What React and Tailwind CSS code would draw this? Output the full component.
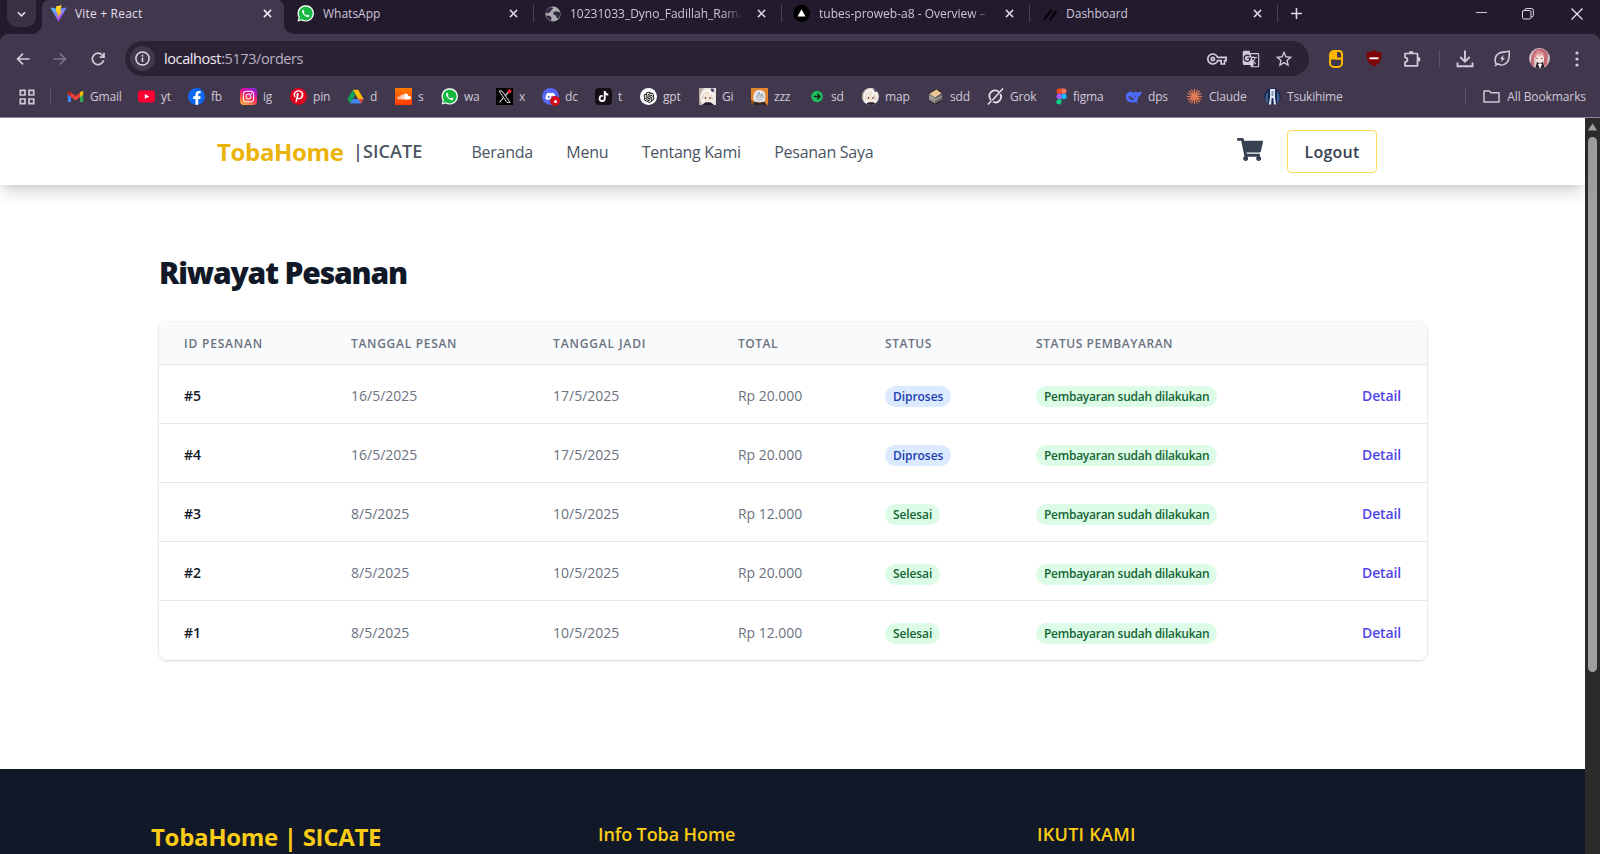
import React from "react";
import { FaFacebookF, FaInstagram, FaPinterestP, FaTiktok, FaSoundcloud, FaDiscord, FaShoppingCart } from "react-icons/fa";
import { AiOutlineOpenAI } from "react-icons/ai";
import { MdOutlineVpnKey, MdGTranslate, MdStarBorder } from "react-icons/md";

function ViteIcon() {
  return (
    <svg viewBox="0 0 17 17" className="h-[17px] w-[17px] shrink-0">
      <defs>
        <linearGradient id="va" x1="0" y1="0" x2="0.6" y2="1">
          <stop offset="0" stopColor="#41d1ff" />
          <stop offset="1" stopColor="#bd34fe" />
        </linearGradient>
        <linearGradient id="vb" x1="0" y1="0" x2="0" y2="1">
          <stop offset="0" stopColor="#ffdd35" />
          <stop offset="1" stopColor="#ffa800" />
        </linearGradient>
      </defs>
      <path d="M.4 2.6 8.5 16.8 16.7 2.6 11.5 3.5 5.5 3.4Z" fill="url(#va)" />
      <path d="M11.6.2 6.2 1.3 5.8 7.2l1.8-.4-.6 3 1.3-.3-.7 4 4.4-7.4-1.7.3Z" fill="url(#vb)" />
    </svg>
  );
}

function WhatsAppIcon() {
  return (
    <svg viewBox="0 0 17 17" className="h-[17px] w-[17px] shrink-0">
      <path d="M.5 16.6 1.6 12.4A8.2 8.2 0 1 1 4.7 15.5Z" fill="#fff" />
      <path d="M2 15.1 2.9 12.2A6.9 6.9 0 1 1 5 14.3Z" fill="#14b83f" />
      <path d="M6 4.6c-.9.4-1.3 1.5-.8 2.6.9 2.2 2.4 3.8 4.7 4.8 1.3.5 2.4-.2 2.5-1.6L10.6 9.4l-1 1C8.400 10 7.300 8.900 6.800 7.700l.8-.9Z" fill="#fff" />
    </svg>
  );
}

function GlobeIcon() {
  return (
    <svg viewBox="0 0 16 16" className="h-[16px] w-[16px] shrink-0">
      <circle cx="8" cy="8" r="7.6" fill="#a9abb1" />
      <path d="M6 1.200c2 .4 2.800 1.300 1.200 2.400-1.500.6-.6 2-2.200 2.400L2.600 7.500.8 6.500C1.500 3.500 3.500 1.500 6 1.200ZM8.500 6l3-.8 3.700 1.300c.3 2.500-.4 4.500-2 6l-1.700-.7-.4-2.400-2.700-.9ZM1 9.600l4 .5 1.500 1.700-.4 3C3.500 14.200 1.500 12.300 1 9.600Z" fill="#33293f" />
    </svg>
  );
}

function TriangleIcon() {
  return (
    <svg viewBox="0 0 17 17" className="h-[17px] w-[17px] shrink-0">
      <circle cx="8.500" cy="8.500" r="8.400" fill="#000" />
      <path d="M8.500 4.200 12.500 11.600H4.500Z" fill="#fff" />
    </svg>
  );
}

function SlashIcon() {
  return (
    <svg viewBox="0 0 16 16" className="h-4 w-4 shrink-0">
      <path d="M4 12.500 10 4.500M9.500 13 14.500 6" stroke="#08070a" strokeWidth="2.600" strokeLinecap="round" />
    </svg>
  );
}

function Cross({ className }) {
  return (
    <svg viewBox="0 0 10 10" className={className} fill="none" stroke="currentColor">
      <path d="M1 1 9 9M9 1 1 9" strokeWidth="1.700" />
    </svg>
  );
}

function Tab({ icon, title, fade }) {
  return (
    <div className="flex h-[27px] w-[248px] shrink-0 items-center pr-[11px]">
      {icon}
      <span
        className={`ml-[9px] min-w-0 flex-1 whitespace-nowrap text-[12px] leading-4 text-[#cfc6d8] ${
          fade ? "[mask-image:linear-gradient(to_right,black_88%,transparent)]" : ""
        }`}
      >
        {title}
      </span>
      <Cross className="ml-[14px] h-[9px] w-[9px] shrink-0 text-[#d9d1e2]" />
      <span className="ml-[15px] h-[17px] w-px shrink-0 bg-[#4c4259]" />
    </div>
  );
}

function TabStrip() {
  return (
    <div className="flex h-[34px] items-start bg-[#231a2d]">
      <div className="ml-[7px] flex h-[27px] w-[29px] items-center justify-center rounded-b-[10px] bg-[#3a3145] text-[#e3dcea]">
        <svg viewBox="0 0 10 6" className="h-[6px] w-[9px]" fill="none" stroke="currentColor" strokeWidth="1.800">
          <path d="M1 1 5 5 9 1" />
        </svg>
      </div>
      <div className="relative ml-[6px] flex h-[34px] w-[242px] items-center rounded-t-[7px] bg-[#41384d] pb-[7px] pl-[8px] pr-[12px]">
        <svg viewBox="0 0 10 10" className="absolute -left-[10px] bottom-0 h-[10px] w-[10px]">
          <path d="M10 0V10H0A10 10 0 0 0 10 0Z" fill="#41384d" />
        </svg>
        <svg viewBox="0 0 10 10" className="absolute -right-[10px] bottom-0 h-[10px] w-[10px]">
          <path d="M0 0V10H10A10 10 0 0 1 0 0Z" fill="#41384d" />
        </svg>
        <ViteIcon />
        <span className="ml-[8px] flex-1 text-[12px] leading-4 tracking-[0.19px] text-[#e6dfec]">Vite + React</span>
        <Cross className="h-[9px] w-[9px] text-[#efe9f4]" />
      </div>
      <div className="ml-[13px] flex">
        <Tab icon={<WhatsAppIcon />} title="WhatsApp" />
        <Tab icon={<GlobeIcon />} title="10231033_Dyno_Fadillah_Rama" fade />
        <Tab icon={<TriangleIcon />} title="tubes-proweb-a8 - Overview –" fade />
        <Tab icon={<SlashIcon />} title="Dashboard" />
      </div>
      <div className="flex h-[27px] flex-1 items-center text-[#ddd5e5]">
        <svg viewBox="0 0 11 11" className="ml-[2px] h-[11px] w-[11px]" stroke="currentColor" strokeWidth="1.600">
          <path d="M5.500 0V11M0 5.500H11" />
        </svg>
        <span className="ml-[174px] mt-[-2px] h-px w-[11px] bg-[#cfc7d6]" />
        <svg viewBox="0 0 12 12" className="ml-[35px] h-[12px] w-[12px]" fill="none" stroke="#e3dcea">
          <rect x=".5" y="2.500" width="8.500" height="8.500" rx="1.500" />
          <path d="M3 2.500V1.500Q3 .5 4.500 .5H9.500Q11.400 .5 11.400 2.500V7.500Q11.400 9 9 9" />
        </svg>
        <svg viewBox="0 0 12 12" className="ml-[37px] h-[12px] w-[12px]" stroke="#efe9f4" strokeWidth="1.200">
          <path d="M.5 .5 11.500 11.500M11.500 .5 .5 11.500" />
        </svg>
      </div>
    </div>
  );
}

function Toolbar() {
  return (
    <div className="relative flex h-[49px] items-center bg-[#41384d] text-[#d3cadd]">
      <div className="absolute right-0 top-0 h-[8px] w-[8px] bg-[#231a2d]">
        <div className="h-full w-full rounded-tr-[8px] bg-[#41384d]" />
      </div>
      <div className="absolute left-0 top-0 h-[8px] w-[8px] bg-[#231a2d]">
        <div className="h-full w-full rounded-tl-[8px] bg-[#41384d]" />
      </div>
      <svg viewBox="0 0 14 12" className="ml-[16px] h-[12px] w-[14px]" fill="none" stroke="currentColor" strokeWidth="1.700">
        <path d="M13.500 6H1.500M7 .7 1.600 6 7 11.300" />
      </svg>
      <svg viewBox="0 0 14 12" className="ml-[23px] h-[12px] w-[14px] text-[#7c7289]" fill="none" stroke="currentColor" strokeWidth="1.700">
        <path d="M.5 6H12.500M7 .7 12.400 6 7 11.300" />
      </svg>
      <svg viewBox="0 0 14 14" className="ml-[24px] h-[14px] w-[14px]" fill="none" stroke="currentColor" strokeWidth="1.700">
        <path d="M12.600 8.300A5.700 5.700 0 1 1 11.400 3.200L12.800 4.800" />
        <path d="M13 .8V5.100H8.700" />
      </svg>
      <div className="ml-[20px] flex h-[35px] w-[1184px] items-center rounded-full bg-[#2b2334] pl-[5px]">
        <span className="flex h-[25px] w-[25px] items-center justify-center rounded-full bg-[#41384d]">
          <svg viewBox="0 0 15 15" className="h-[15px] w-[15px]" fill="none" stroke="#e0d8e8" strokeWidth="1.500">
            <circle cx="7.500" cy="7.500" r="6.600" />
            <path d="M7.500 6.600V11M7.500 3.800V5.400" />
          </svg>
        </span>
        <span className="ml-[9px] text-[14.500px] tracking-[-0.4px] text-[#b9b0c4]">
          <span className="text-[#efe9f4]">localhost</span>:5173/orders
        </span>
        <MdOutlineVpnKey className="ml-auto h-[20px] w-[20px]" />
        <MdGTranslate className="ml-[15px] h-[18px] w-[18px]" />
        <MdStarBorder className="ml-[14px] mr-[15px] h-[20px] w-[20px]" />
      </div>
      <svg viewBox="0 0 14 18" className="ml-[20px] h-[18px] w-[14px]" fill="none" stroke="#ffb700" strokeWidth="2">
        <rect x="1" y="1" width="12" height="16" rx="4" fill="#41384d" />
        <path d="M2 8.500H12" />
        <path d="M7 1H11Q13 2 13 4V8.500H7Z" fill="#41384d" />
        <path d="M1.500 8.500V5Q2 1.500 6.500 1.500V8.500Z" fill="#ffb700" stroke="none" />
      </svg>
      <svg viewBox="0 0 16 17" className="ml-[23px] h-[17px] w-[16px]">
        <path d="M8 .3Q10.500 2.300 15.700 2.500 15.700 8 14.300 11 12.500 14.500 8 16.700 3.500 14.500 1.700 11 .3 8 .3 2.500 5.500 2.300 8 .3Z" fill="#7e0309" />
        <path d="M3.500 8.300H12.500" stroke="#fff" strokeWidth="1.800" />
      </svg>
      <svg viewBox="0 0 18 18" className="ml-[21px] h-[18px] w-[18px]" fill="none" stroke="currentColor" strokeWidth="1.700" strokeLinejoin="round">
        <path d="M2 3.500H14.500V15.800H2V12Q4.500 11.500 4.500 9.700 4.500 7.700 2 7.300Z" />
        <path d="M6.500 3V1.700H9.800V3ZM15 7.700H16.800V11H15Z" fill="currentColor" strokeWidth="1" />
      </svg>
      <span className="ml-[18px] h-[17px] w-px bg-[#5f556c]" />
      <svg viewBox="0 0 18 18" className="ml-[16px] h-[18px] w-[18px]" fill="none" stroke="currentColor" strokeWidth="1.900">
        <path d="M9 .5V11.500M4.300 7 9 11.700 13.700 7M1.500 12.500V16.300H16.500V12.500" />
      </svg>
      <svg viewBox="0 0 17 17" className="ml-[20px] h-[17px] w-[17px]" fill="none" stroke="currentColor" strokeWidth="1.600">
        <path d="M2.300 14.700C.3 11 1 6 4 3.800 7 1.500 11 2.300 15.200 1.300 15.500 6 15.500 10 12.700 12.800 9.800 15.800 6 15.300 3.800 13.600M1 16 3.800 13.500" />
        <path d="M9.600 4.800 6 9H8L7.200 12.300 11 8H9Z" fill="currentColor" stroke="none" />
      </svg>
      <svg viewBox="0 0 21 21" className="ml-[18px] h-[21px] w-[21px]">
        <defs><clipPath id="av"><circle cx="10.500" cy="10.500" r="10.400" /></clipPath></defs>
        <g clipPath="url(#av)">
          <rect width="21" height="21" fill="#d9c6c8" />
          <path d="M2 18Q1 4 8 1 16 0 19 6L18 17 15 18 15 8 10 4 5 9 5 18Z" fill="#c26875" />
          <path d="M6 7Q10 3 15 7V12Q12 16 7 13Z" fill="#f6e5df" />
          <path d="M5 7 9 2 15 5 15.500 10 12 6 10.500 9 9 5.500 6.500 11Z" fill="#dc8f98" />
          <path d="M6 21 8 14 11 16 14 14 16 21Z" fill="#2c2730" />
          <path d="M9 16 11 21 13 16Z" fill="#fff" />
          <path d="M7.500 10.500H9M12 10.500H13.500" stroke="#8e2e3c" />
        </g>
      </svg>
      <svg viewBox="0 0 4 16" className="ml-[25px] h-[16px] w-[4px]" fill="currentColor">
        <circle cx="2" cy="2" r="1.600" /><circle cx="2" cy="8" r="1.600" /><circle cx="2" cy="14" r="1.600" />
      </svg>
    </div>
  );
}

function Tile({ className, children }) {
  return <span className={`flex h-[17px] w-[17px] shrink-0 items-center justify-center overflow-hidden ${className}`}>{children}</span>;
}

function Svg({ children, box = "0 0 17 17" }) {
  return <svg viewBox={box} className="h-[17px] w-[17px] shrink-0">{children}</svg>;
}

const gmail = (
  <Svg>
    <path d="M.8 4V14H4V7Z" fill="#4285f4" />
    <path d="M13 7V14H16.200V4Z" fill="#34a853" />
    <path d="M13 4 16.200 3V6.500L13 9Z" fill="#fbbc04" />
    <path d="M4 4.500 8.500 8 13 4.500V9L8.500 12.400 4 9Z" fill="#ea4335" />
    <path d="M.8 4.500Q1.500 2 4 4.500V9L.8 6.500Z" fill="#c5221f" />
  </Svg>
);

const youtube = (
  <Svg>
    <rect x="0" y="2.500" width="17" height="12" rx="3" fill="#ff0033" />
    <path d="M6.800 6 11.200 8.500 6.800 11Z" fill="#fff" />
  </Svg>
);

const drive = (
  <Svg>
    <path d="M5.800 1.800H11.200L16.600 11H11.200Z" fill="#fbbc04" />
    <path d="M5.800 1.800 8.500 6.400 3 15.500.4 11Z" fill="#12a05c" />
    <path d="M5.700 11H16.600L13.900 15.500H3Z" fill="#4285f4" />
    <path d="M11.200 11H16.600L13.900 15.500Z" fill="#ea4335" />
  </Svg>
);

const xLogo = (
  <Svg>
    <rect width="17" height="17" fill="#000" />
    <path d="M3 3H6L14 14.500H11Z" fill="none" stroke="#ddd" />
    <path d="M13 3.500 9.500 7.500M7.500 9.500 3.500 14.500" stroke="#ddd" strokeWidth="1.200" />
    <circle cx="13.500" cy="3.300" r="2" fill="#f0242f" />
  </Svg>
);

const discord = (
  <span className="relative flex h-[17px] w-[17px] shrink-0 items-center justify-center rounded-full bg-[#5865f2]">
    <FaDiscord className="h-[11px] w-[11px] text-white" />
    <span className="absolute -bottom-px -right-px flex h-[10px] w-[10px] items-center justify-center rounded-full bg-[#d40d1c]">
      <span className="h-[3px] w-[3px] rounded-full bg-white" />
    </span>
  </span>
);

const paimonArt = (
  <>
    <rect width="17" height="17" fill="#e9e2dc" />
    <path d="M0 0H5L1.500 6V12L3 17H0Z" fill="#b9aaa3" />
    <path d="M2 14Q0 4 6 1.500 12 0 15.500 6L14.500 14 11 16H5Z" fill="#f7f3ee" />
    <path d="M5 8.500 8.500 6 12.500 8.500V11.500L9 14 5.500 12Z" fill="#fbe3d2" />
    <path d="M3.500 11.500 4.500 6.500 7.500 3.500M9.500 3.500 8 7M13.500 12 12.500 6.500" fill="none" stroke="#cdb79f" strokeWidth=".8" />
    <path d="M6.500 9V11M11 9V11" stroke="#5b4a63" strokeWidth="1.200" />
    <path d="M3 17 6.500 14.300H11.500L15 17Z" fill="#231d2b" />
    <path d="M11.500 .8 14.500 .5 15 4 12.500 3.500Z" fill="#3f3768" />
  </>
);

const orangeArt = (
  <>
    <rect width="17" height="17" fill="#e2852c" />
    <path d="M2.500 12Q1.500 4 7 2 13.500 1 14.500 8L13.500 14H4Z" fill="#e6eaee" />
    <path d="M5 9 8 6 12 9V12L8.500 14 5.500 12.500Z" fill="#c9d0d8" />
    <path d="M5 9.500 8 4 9.500 8.500 11 5.500 13 10" fill="none" stroke="#8c9aa8" strokeWidth=".9" />
    <path d="M1 17 4 13.500 8.500 15 13 13.500 16 17Z" fill="#2f2930" />
    <path d="M0 12 3 14 1 17H0Z" fill="#7a4a26" />
  </>
);

const arrowDot = (
  <Svg>
    <circle cx="9" cy="8.500" r="5.700" fill="#1fbf5c" />
    <path d="M5.800 8.500H11.800M9.300 5.800 12 8.500 9.300 11.200" fill="none" stroke="#0d2a18" strokeWidth="1.500" />
  </Svg>
);

const box = (
  <Svg>
    <path d="M2 6 8 9.500V16.300L2 12.500Z" fill="#8f8b8a" />
    <path d="M8 9.500 15 6 15 12.500 8 16.300Z" fill="#6d6765" />
    <path d="M2 5.500 9.500 1 15 5 8 9.500Z" fill="#eac392" />
    <path d="M2 5.500 9.500 1 15 5" fill="none" stroke="#2c2421" />
    <path d="M2 8.500 8 12 15 8.500" fill="none" stroke="#b9b3ae" />
    <path d="M2 12.500 8 16.300 15 12.500" fill="none" stroke="#221b22" />
  </Svg>
);

const grok = (
  <Svg>
    <path d="M13.300 6A5.600 5.600 0 0 1 6 13.800M3.900 12A5.700 5.700 0 0 1 11.800 3.800" fill="none" stroke="#e6dfec" strokeWidth="1.800" />
    <path d="M5.300 12.200 16 .6M1 16.500 4.500 12.500" fill="none" stroke="#e6dfec" strokeWidth="1.500" />
  </Svg>
);

const figma = (
  <svg viewBox="0 0 11 17" className="h-[17px] w-[11px] shrink-0">
    <path d="M5.500 .5H3.200A2.600 2.600 0 0 0 3.200 5.800H5.500Z" fill="#f24e1e" />
    <path d="M5.500 .5H7.800A2.600 2.600 0 0 1 7.800 5.800H5.500Z" fill="#ff7262" />
    <path d="M5.500 5.800H3.200A2.600 2.600 0 0 0 3.200 11.200H5.500Z" fill="#a259ff" />
    <circle cx="8" cy="8.500" r="2.650" fill="#1abcfe" />
    <path d="M5.500 11.200H3.200A2.600 2.600 0 1 0 5.500 13.800Z" fill="#0acf83" />
  </svg>
);

const whale = (
  <Svg>
    <path d="M.8 8C1.500 4 5 2.500 8.500 4.700 9.500 5.500 10 5 10.200 2.700 11.500 5 13.500 5 16.500 3 16.300 6.500 15 8 13.500 8.600 13.200 11 12.500 12 11.500 13L13 14.500Q10.500 15 9 14.200 3 15.500 1.200 11 .6 9.500 .8 8Z" fill="#4d6bfe" />
    <path d="M3 8.300Q6 7.800 9.500 12.300 5 12.300 3 8.300ZM8 7 10.700 8.300 10.500 9.600Z" fill="#41384d" />
  </Svg>
);

const burst = (
  <Svg>
    <path d="M8.500 .8V16.200M.8 8.500H16.200M3 3 14 14M14 3 3 14M5.500 1.500 11.500 15.500M11.500 1.500 5.500 15.500M1.500 5.500 15.500 11.500M1.500 11.500 15.500 5.500" stroke="#e07b53" strokeWidth="1.100" />
    <circle cx="8.500" cy="8.500" r="2.500" fill="#e07b53" />
  </Svg>
);

const moonTower = (
  <Svg>
    <circle cx="8.500" cy="8.500" r="8.300" fill="#15254e" />
    <path d="M2 14Q0 8 4 3V15ZM13 3Q17 8 14.500 14L13 15Z" fill="#426292" />
    <path d="M6 1H11V9L12 16.500H9.800L9.300 10H7.700L7.200 16.500H4.800L6 9Z" fill="#dfe5f4" />
    <path d="M7.500 3H9.500V8H7.500Z" fill="#8295bb" />
  </Svg>
);

const bookmarks = [
  { label: "Gmail", width: "w-[71px]", icon: gmail },
  { label: "yt", width: "w-[50px]", icon: youtube },
  { label: "fb", width: "w-[52px]", icon: <Tile className="items-end rounded-full bg-[#1068f2]"><FaFacebookF className="mt-[3px] h-[14px] w-[14px] text-white" /></Tile> },
  { label: "ig", width: "w-[50px]", icon: <Tile className="rounded-[4px] bg-[linear-gradient(25deg,#ffc23d,#fb3553_45%,#d40bb0_70%,#7a2df0)]"><FaInstagram className="h-[13px] w-[13px] text-white" /></Tile> },
  { label: "pin", width: "w-[57px]", icon: <Tile className="rounded-full bg-[#e0021f]"><FaPinterestP className="h-[13px] w-[13px] text-white" /></Tile> },
  { label: "d", width: "w-[48px]", icon: drive },
  { label: "s", width: "w-[46px]", icon: <Tile className="bg-[linear-gradient(#ff7a00,#ff3a00)]"><FaSoundcloud className="h-[13px] w-[14px] text-white" /></Tile> },
  { label: "wa", width: "w-[55px]", icon: <WhatsAppIcon /> },
  { label: "x", width: "w-[46px]", icon: xLogo },
  { label: "dc", width: "w-[53px]", icon: discord },
  { label: "t", width: "w-[45px]", icon: <Tile className="rounded-[4px] bg-[#150c14]"><FaTiktok className="h-[11px] w-[11px] text-white" /></Tile> },
  { label: "gpt", width: "w-[59px]", icon: <Tile className="rounded-full bg-white"><AiOutlineOpenAI className="h-[14px] w-[14px] text-black" /></Tile> },
  { label: "Gi", width: "w-[52px]", icon: <Svg>{paimonArt}</Svg> },
  { label: "zzz", width: "w-[57px]", icon: <Svg>{orangeArt}</Svg> },
  { label: "sd", width: "w-[54px]", icon: arrowDot },
  { label: "map", width: "w-[65px]", icon: <Tile className="rounded-full"><Svg>{paimonArt}</Svg></Tile> },
  { label: "sdd", width: "w-[60px]", icon: box },
  { label: "Grok", width: "w-[69px]", icon: grok },
  { label: "figma", width: "w-[69px]", icon: figma },
  { label: "dps", width: "w-[61px]", icon: whale },
  { label: "Claude", width: "w-[78px]", icon: burst },
  { label: "Tsukihime", width: "w-[90px]", icon: moonTower },
];

function BookmarkBar() {
  return (
    <div className="flex h-[35px] items-center border-b border-[#8f8996] bg-[#41384d] pb-[7px] text-[12px] leading-4 tracking-[-0.2px] text-[#d0c8d9]">
      <svg viewBox="0 0 16 16" className="ml-[19px] h-[16px] w-[16px] shrink-0" fill="none" stroke="currentColor" strokeWidth="1.700">
        <path d="M1.300 1.300H6V6H1.300ZM10 1.300H14.700V6H10ZM1.300 10H6V14.700H1.300ZM10 10H14.700V14.700H10Z" />
      </svg>
      <span className="ml-[15px] h-[17px] w-px bg-[#5f556c]" />
      <div className="ml-[16px] flex flex-1">
        {bookmarks.map((b) => (
          <div key={b.label} className={`flex shrink-0 items-center gap-[6px] whitespace-nowrap ${b.width}`}>
            {b.icon}
            <span>{b.label}</span>
          </div>
        ))}
      </div>
      <span className="h-[17px] w-px bg-[#5f556c]" />
      <svg viewBox="0 0 17 13" className="ml-[17px] h-[13px] w-[17px]" fill="none" stroke="currentColor" strokeWidth="1.500" strokeLinejoin="round">
        <path d="M1 1H6.300L8 2.700H16V12H1Z" />
      </svg>
      <span className="ml-[7px] mr-[14px] whitespace-nowrap tracking-[-0.1px]">All Bookmarks</span>
    </div>
  );
}

function Navbar() {
  return (
    <header className="relative z-10 flex h-[67px] shrink-0 items-center bg-white pl-[217px] pr-[208px] text-[16px] text-[#4b5563] shadow-[0_10px_15px_-3px_rgba(0,0,0,0.16),0_4px_6px_-4px_rgba(0,0,0,0.12)]">
      <div className="flex items-center whitespace-nowrap">
        <span className="w-[136px] pt-px text-2xl font-bold tracking-[-0.35px] text-[#eab308]">TobaHome</span>
        <span className="w-[10px] text-[18px] font-semibold">|</span>
        <span className="text-[18px] font-semibold tracking-[0.1px]">SICATE</span>
      </div>
      <nav className="ml-[49px] flex gap-[33.500px] whitespace-nowrap pt-px tracking-[-0.28px]">
        <a>Beranda</a>
        <a>Menu</a>
        <a>Tentang Kami</a>
        <a>Pesanan Saya</a>
      </nav>
      <FaShoppingCart className="mb-[4px] ml-auto h-[25px] w-[26px] text-[#374151]" />
      <button className="ml-[24px] h-[43px] w-[90px] rounded-[4px] border border-[#fadb5a] pt-px font-semibold tracking-[0.25px] text-[#374151]">
        Logout
      </button>
    </header>
  );
}

const orders = [
  { id: "#5", ordered: "16/5/2025", ready: "17/5/2025", total: "Rp 20.000", status: "Diproses" },
  { id: "#4", ordered: "16/5/2025", ready: "17/5/2025", total: "Rp 20.000", status: "Diproses" },
  { id: "#3", ordered: "8/5/2025", ready: "10/5/2025", total: "Rp 12.000", status: "Selesai" },
  { id: "#2", ordered: "8/5/2025", ready: "10/5/2025", total: "Rp 20.000", status: "Selesai" },
  { id: "#1", ordered: "8/5/2025", ready: "10/5/2025", total: "Rp 12.000", status: "Selesai" },
];

function Pill({ tone, children }) {
  return (
    <span className={`mt-[3px] inline-flex h-[21px] items-center rounded-full px-[8px] text-[12px] font-semibold ${tone}`}>
      {children}
    </span>
  );
}

function OrdersTable() {
  return (
    <div className="mt-[30px] w-[1268px] overflow-hidden rounded-[8px] shadow-[0_0_0_1px_rgba(0,0,0,0.03),0_1px_3px_rgba(0,0,0,0.14)]">
      <table className="w-full table-fixed text-left text-[14px]">
        <colgroup>
          <col className="w-[167px]" />
          <col className="w-[202px]" />
          <col className="w-[185px]" />
          <col className="w-[147px]" />
          <col className="w-[151px]" />
          <col className="w-[250px]" />
          <col className="w-[166px]" />
        </colgroup>
        <thead className="bg-[#f9fafb] text-[12px] text-[#6b7280]">
          <tr className="h-[42px] [&>th]:pl-[25px] [&>th]:pt-[2px] [&>th]:font-semibold">
            <th className="tracking-[0.8px]">ID PESANAN</th>
            <th className="tracking-[0.7px]">TANGGAL PESAN</th>
            <th className="tracking-[0.85px]">TANGGAL JADI</th>
            <th className="tracking-[0.5px]">TOTAL</th>
            <th className="tracking-[0.55px]">STATUS</th>
            <th className="tracking-[0.55px]">STATUS PEMBAYARAN</th>
            <th />
          </tr>
        </thead>
        <tbody className="bg-white text-[#6b7280]">
          {orders.map((o) => (
            <tr key={o.id} className="h-[59.200px] border-t border-[#e5e7eb] [&>td]:pl-[25px] [&>td]:pt-[3px]">
              <td className="font-semibold text-[#111827]">{o.id}</td>
              <td>{o.ordered}</td>
              <td>{o.ready}</td>
              <td className="tracking-[-0.05px]">{o.total}</td>
              <td>
                <Pill tone={o.status === "Diproses" ? "tracking-[-0.05px] bg-[#dbeafe] text-[#1e40af]" : "tracking-[-0.1px] bg-[#dcfce7] text-[#166534]"}>{o.status}</Pill>
              </td>
              <td>
                <Pill tone="tracking-[-0.26px] bg-[#dcfce7] text-[#166534]">Pembayaran sudah dilakukan</Pill>
              </td>
              <td className="pr-[26px] text-right font-semibold tracking-[-0.15px] text-[#4f46e5]">Detail</td>
            </tr>
          ))}
        </tbody>
      </table>
    </div>
  );
}

function Footer() {
  return (
    <footer className="flex h-[85px] shrink-0 items-start overflow-hidden whitespace-nowrap bg-[#111827] pl-[151px] pt-[51px] text-[18px] font-semibold leading-7 text-[#facc15]">
      <h2 className="w-[447px] pt-px text-[24px] font-bold leading-8 tracking-[-0.31px]">TobaHome | SICATE</h2>
      <h3 className="w-[439px] tracking-[-0.1px]">Info Toba Home</h3>
      <h3 className="tracking-[0.27px]">IKUTI KAMI</h3>
    </footer>
  );
}

function Scrollbar() {
  return (
    <div className="flex w-[15px] shrink-0 flex-col items-center bg-[#2b2b2b] pt-[5px]">
      <svg viewBox="0 0 10 8" className="h-[8px] w-[11px]">
        <path d="M5 .5 9.700 7.500H.3Z" fill="#9f9f9f" />
      </svg>
      <div className="mt-[6px] h-[535px] w-[9px] rounded-full bg-[#9f9f9f]" />
    </div>
  );
}

export default function App() {
  return (
    <div className="flex h-[854px] w-[1600px] flex-col overflow-hidden bg-white font-['Open_Sans','Noto_Sans',sans-serif]">
      <TabStrip />
      <Toolbar />
      <BookmarkBar />
      <div className="flex min-h-0 flex-1">
        <div className="flex min-w-0 flex-1 flex-col">
          <Navbar />
          <main className="flex-1 pl-[159px] pt-[67px]">
            <h1 className="h-[40px] text-[30px] font-extrabold leading-[41px] tracking-[-1.15px] text-[#111827]">Riwayat Pesanan</h1>
            <OrdersTable />
          </main>
          <Footer />
        </div>
        <Scrollbar />
      </div>
    </div>
  );
}
